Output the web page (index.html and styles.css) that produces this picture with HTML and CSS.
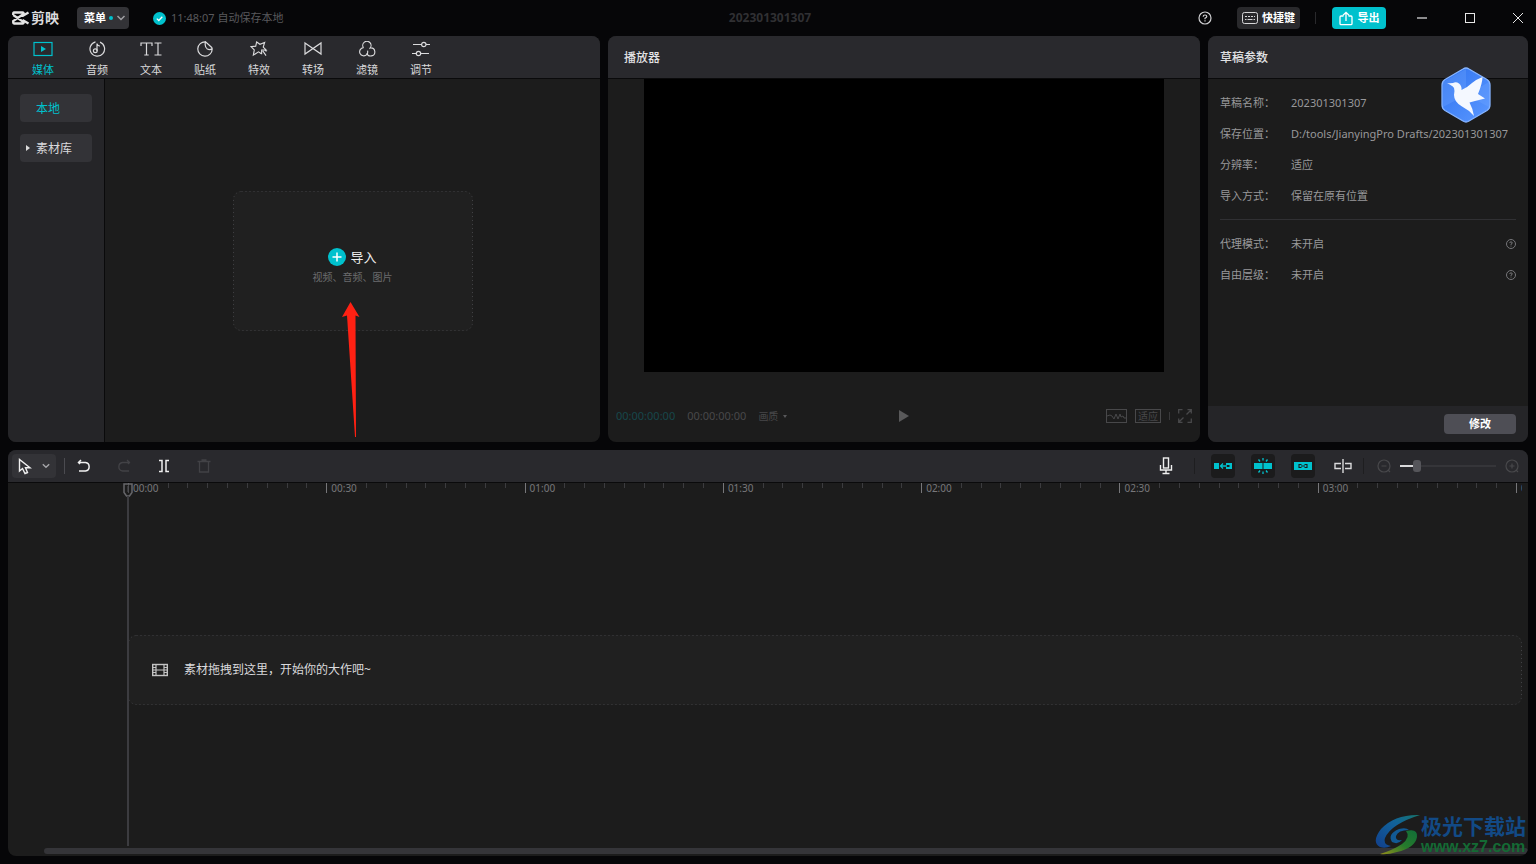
FILE: index.html
```html
<!DOCTYPE html>
<html lang="zh-CN">
<head>
<meta charset="utf-8">
<title>剪映</title>
<link rel="stylesheet" href="styles.css">
</head>
<body>
<div class="app">
  <header class="titlebar">
    <div class="title-left">
      <div class="brand">
        <svg width="18" height="14" viewBox="0 0 18 14" fill="none" stroke="#e4e4e4" stroke-width="2.300"><path d="M1.200 4V2.500Q1.200 1.500 2 1.500H10.500Q12 1.500 11.500 3L1.200 10V11.500Q1.200 12.500 2 12.500H10.500Q12 12.500 11.500 11L1.200 4M10.500 5L16.500 1.500M10.500 9L16.500 12.500"/></svg>
        <span>剪映</span>
      </div>
      <button class="menu-btn">菜单<i class="dot"></i><svg width="10" height="8" viewBox="0 0 10 8" fill="none" stroke="#a0a0a4" stroke-width="1.500"><path d="M1.500 2L5 5.500L8.500 2"/></svg></button>
      <div class="saved">
        <svg width="13" height="13" viewBox="0 0 13 13"><circle cx="6.500" cy="6.500" r="6.500" fill="#00c1cd"/><path d="M3.800 6.600L5.800 8.500L9.300 4.800" fill="none" stroke="#fff" stroke-width="1.300"/></svg>
        <span>11:48:07 自动保存本地</span>
      </div>
    </div>
    <h1 class="doc-title">202301301307</h1>
    <div class="title-right">
      <button class="icon-btn" aria-label="帮助"><svg width="14" height="14" viewBox="0 0 14 14" fill="none" stroke="#cfcfd1" stroke-width="1.200"><circle cx="7" cy="7" r="6"/><path d="M5.200 5.700Q5.200 4 7 4T8.800 5.600Q8.800 6.500 7 7.200V8.300M7 9.300V10.500"/></svg></button>
      <button class="short-btn"><svg width="16" height="12" viewBox="0 0 16 12" fill="none" stroke="#d6d6d8"><rect x=".5" y=".5" width="15" height="11" rx="2"/><path d="M3 4.500H13" stroke-dasharray="2 1"/><path d="M3 7.500H4.500M5.500 7.500H10.500M11.500 7.500H13"/></svg>快捷键</button>
      <i class="vline"></i>
      <button class="export-btn"><svg width="14" height="15" viewBox="0 0 14 15" fill="none" stroke="#fff" stroke-width="1.300"><path d="M4.500 5H2Q1 5 1 6V12.500Q1 13.700 2 13.700H12Q13 13.700 13 12.500V6Q13 5 12 5H9.500M7 10V1.500M4 4.200L7 1.300L10 4.200"/></svg>导出</button>
      <div class="win-btns">
        <button class="icon-btn" aria-label="最小化"><svg width="12" height="12" viewBox="0 0 12 12"><path d="M1 6H11" stroke="#8b8b8d" stroke-width="2"/></svg></button>
        <button class="icon-btn" aria-label="最大化"><svg width="12" height="12" viewBox="0 0 12 12"><rect x="1.500" y="1.500" width="9" height="9" fill="none" stroke="#e6e6e6"/></svg></button>
        <button class="icon-btn" aria-label="关闭"><svg width="12" height="12" viewBox="0 0 12 12"><path d="M1 1L11 11M11 1L1 11" stroke="#e6e6e6"/></svg></button>
      </div>
    </div>
  </header>

  <div class="workspace">
  <main class="upper">
    <section class="panel">
      <nav class="panel-head tabs">
        <button class="tab on"><svg width="20" height="16" viewBox="0 0 20 16"><rect x="1" y="1.500" width="18" height="13" fill="none" stroke="#00c1cd" stroke-width="1.200"/><path d="M8 5V11L13 8Z" fill="#00c1cd"/></svg>媒体</button>
        <button class="tab"><svg width="18" height="16" viewBox="0 0 18 16" fill="none" stroke="#dadadc" stroke-width="1.200"><path d="M12 1.100A7.300 7.300 0 1 1 7.500 .8M9 10V2.500Q9.500 5 12 5"/><circle cx="7.300" cy="9.800" r="1.900"/></svg>音频</button>
        <button class="tab"><svg width="22" height="16" viewBox="0 0 22 16" fill="none" stroke="#dadadc" stroke-width="1.200"><path d="M1 5V2H12V5M6.500 2V14M4.300 14H8.700M14.500 2H21.500M18 2V14M14.500 14H21.500"/></svg>文本</button>
        <button class="tab"><svg width="18" height="16" viewBox="0 0 18 16" fill="none" stroke="#dadadc" stroke-width="1.200"><path d="M9.500 .8A7.200 7.200 0 1 0 16.200 8Q16.200 7 15.500 6.200L9.500 .8Q8.300 6 11.300 8Q14 9.300 16.200 7.500"/></svg>贴纸</button>
        <button class="tab"><svg width="20" height="17" viewBox="0 0 20 17" fill="none" stroke="#dadadc" stroke-width="1.200"><path d="M12.500 13.500L9.500 11.500L4 15L5 9.500L1.500 6L6.500 5.500L7.500 1L11 3.500L16 1.500L14.500 6.500L17.500 9.500L12.800 9.500V14M14 10.500L17.500 15.500M16 9.500L18 11"/></svg>特效</button>
        <button class="tab"><svg width="18" height="16" viewBox="0 0 18 16" fill="none" stroke="#dadadc" stroke-width="1.200"><path d="M1 2L17 13V2L1 13Z"/></svg>转场</button>
        <button class="tab"><svg width="20" height="17" viewBox="0 0 20 17" fill="none" stroke="#dadadc" stroke-width="1.200"><path d="M6.300 7.300A4.400 4.400 0 1 1 12.600 8.200M13.700 7.300A4.300 4.300 0 1 1 9.800 12.500M6.300 7A4.400 4.400 0 1 0 9.700 14.500Q11.200 13 10.600 10.300"/></svg>滤镜</button>
        <button class="tab"><svg width="18" height="16" viewBox="0 0 18 16" fill="none" stroke="#dadadc" stroke-width="1.200"><path d="M1 3.500H9.500M14 3.500H18M0 12.500H4M9 12.500H17"/><circle cx="11.800" cy="3.500" r="2.200"/><circle cx="6.500" cy="12.500" r="2.200"/></svg>调节</button>
      </nav>
      <div class="media">
        <aside class="side">
          <button class="side-item on">本地</button>
          <button class="side-item"><svg class="caret" width="4" height="6" viewBox="0 0 4 6"><path d="M0 0L4 3L0 6Z" fill="#dcdcdc"/></svg>素材库</button>
        </aside>
        <div class="drop-area">
          <button class="import">
            <svg class="dots"><rect x=".5" y=".5" rx="8"/></svg>
            <span class="import-main"><svg width="18" height="18" viewBox="0 0 18 18"><circle cx="9" cy="9" r="9" fill="#00c1cd"/><path d="M4.500 9H13.500M9 4.500V13.500" stroke="#fff" stroke-width="1.500"/></svg>导入</span>
            <span class="import-sub">视频、音频、图片</span>
          </button>
          <svg class="arrow" width="20" height="136" viewBox="0 0 20 136"><path d="M9.500 1L18.500 16L14.500 14.500L15 136H14L6 14.500L1 16Z" fill="#ff2113"/></svg>
        </div>
      </div>
    </section>

    <section class="panel">
      <h2 class="panel-head head-text">播放器</h2>
      <div class="player">
        <div class="screen"></div>
        <div class="controls">
          <div class="times"><span class="now">00:00:00:00</span><span>00:00:00:00</span><button class="quality">画质<svg width="4" height="3" viewBox="0 0 4 3"><path d="M0 0H4L2 3Z" fill="#58585a"/></svg></button></div>
          <button class="icon-btn" aria-label="播放"><svg width="10" height="12" viewBox="0 0 10 12"><path d="M0 0L10 6L0 12Z" fill="#59595a"/></svg></button>
          <div class="view-tools">
            <button class="tool-s" aria-label="示波器"><svg width="21" height="14" viewBox="0 0 21 14" fill="none" stroke="#48484a"><rect x=".5" y=".5" width="20" height="13"/><path d="M1 7L4 6L6 7L8 10L10 5L12 10L14 5L15 8L17 7L18 9H20"/></svg></button>
            <button class="fit">适应</button>
            <i class="vline short"></i>
            <button class="tool-s" aria-label="全屏"><svg width="14" height="14" viewBox="0 0 14 14" fill="none" stroke="#48484a" stroke-width="1.300"><path d="M.7 4.500V.7H4.500M9.500 .7H13.300V4.500M13.300 .7L8.500 5.500M13.300 9.500V13.300H9.500M4.500 13.300H.7V9.500M.7 13.300L5.500 8.500"/></svg></button>
          </div>
        </div>
      </div>
    </section>

    <section class="panel">
      <h2 class="panel-head head-text narrow">草稿参数</h2>
      <div class="params">
        <dl>
          <div><dt>草稿名称：</dt><dd>202301301307</dd></div>
          <div><dt>保存位置：</dt><dd>D:/tools/JianyingPro Drafts/202301301307</dd></div>
          <div><dt>分辨率：</dt><dd>适应</dd></div>
          <div><dt>导入方式：</dt><dd>保留在原有位置</dd></div>
        </dl>
        <dl class="second">
          <div><dt>代理模式：</dt><dd>未开启</dd><svg width="10" height="10" viewBox="0 0 14 14" fill="none" stroke="#77777a" stroke-width="1.400"><circle cx="7" cy="7" r="6.300"/><path d="M5.200 5.700Q5.200 4 7 4T8.800 5.600Q8.800 6.500 7 7.200V8.300M7 9.300V10.500"/></svg></div>
          <div><dt>自由层级：</dt><dd>未开启</dd><svg width="10" height="10" viewBox="0 0 14 14" fill="none" stroke="#77777a" stroke-width="1.400"><circle cx="7" cy="7" r="6.300"/><path d="M5.200 5.700Q5.200 4 7 4T8.800 5.600Q8.800 6.500 7 7.200V8.300M7 9.300V10.500"/></svg></div>
        </dl>
      </div>
      <footer class="params-foot"><button class="edit">修改</button></footer>
      <svg class="bird" width="50" height="56" viewBox="0 0 50 56">
        <defs><linearGradient id="hex" x1="0" y1="0" x2="1" y2="1"><stop offset="0" stop-color="#2f73f0"/><stop offset="1" stop-color="#5b98ff"/></linearGradient></defs>
        <path d="M22 2Q25 0 28 2L46 12.500Q49 14.500 49 18V38Q49 41.500 46 43.500L28 54Q25 56 22 54L4 43.500Q1 41.500 1 38V18Q1 14.500 4 12.500Z" fill="url(#hex)" stroke="#86b4ff" stroke-width="1.300"/>
        <path d="M25 2V28L48 15V40L25 28L2 40V15Z" fill="#73a8ff" opacity=".3"/>
        <path d="M6 16.500L12 16Q15 14.500 18 16.500Q21 19 20.500 23Q27 20 31 16Q35 12.500 41.500 10Q41.500 16 37 27L44 31.500L34 34L28.500 35.500Q32 42 33 49Q28 43 21 39.500Q13 35 13 28Q14 24 13 21Q11 18 6 16.500Z" fill="#f4f8ff"/>
      </svg>
    </section>
  </main>

  <section class="panel">
    <div class="toolbar">
      <button class="select-tool" aria-label="选择"><svg width="14" height="17" viewBox="0 0 14 17" fill="none" stroke="#f0f0f0" stroke-width="1.400"><path d="M1.500 1.500V13L4.500 10.500L7 15.500L9.500 14.500L7.500 9.800H12Z"/></svg><svg width="8" height="6" viewBox="0 0 8 6" fill="none" stroke="#a5a5a8" stroke-width="1.400"><path d="M.8 1.200L4 4.200L7.200 1.200"/></svg></button>
      <i class="vline grey"></i>
      <button class="tool" aria-label="撤销"><svg width="14" height="14" viewBox="0 0 14 14" fill="none" stroke="#f0f0f0" stroke-width="1.500"><path d="M1 3.500H8.500A4.300 4.300 0 0 1 8.500 12H2M4 1L1.500 3.500L3 5"/></svg></button>
      <button class="tool" aria-label="重做" disabled><svg width="14" height="14" viewBox="0 0 14 14" fill="none" stroke="#424246" stroke-width="1.300"><path d="M13 3.500H5.500A4.300 4.300 0 0 0 5.500 12H12M10 1L12.500 3.500L11 5"/></svg></button>
      <button class="tool" aria-label="分割"><svg width="12" height="14" viewBox="0 0 12 14" fill="none" stroke="#f0f0f0" stroke-width="1.500"><path d="M1 1.500H4V12.500H1M11 1.500H8V12.500H11"/></svg></button>
      <button class="tool" aria-label="删除" disabled><svg width="14" height="14" viewBox="0 0 14 14" fill="none" stroke="#424246" stroke-width="1.300"><path d="M.5 2.500H13.500M4.500 1H9.500M2.500 2.500V13H11.500V2.500"/></svg></button>
      <div class="tools-right">
        <button class="tool" aria-label="录音"><svg width="14" height="18" viewBox="0 0 14 18" fill="none" stroke="#f0f0f0" stroke-width="1.400"><rect x="4.500" y="1" width="5" height="10"/><path d="M1.500 8V13H12.500V8M7 13V16.500M3.500 16.500H10.500"/></svg></button>
        <i class="vline dark"></i>
        <button class="tool toggled" aria-label="主轨磁吸"><svg width="18" height="8" viewBox="0 0 18 8"><path d="M0 1H5V7H0ZM12 1H18V7H12V5H15.500V3H12Z" fill="#00c1cd"/><path d="M9 1.500L6.500 4L9 6.500M7 4H13" fill="none" stroke="#00c1cd" stroke-width="1.300"/></svg></button>
        <button class="tool toggled" aria-label="自动吸附"><svg width="18" height="16" viewBox="0 0 18 16"><path d="M0 5H8.500V11H0ZM9.500 5H18V11H9.500Z" fill="#00c1cd"/><path d="M9 0V2.500M9 13.500V16M4.500 1.500L6 3.500M13.500 1.500L12 3.500M4.500 14.500L6 12.500M13.500 14.500L12 12.500" stroke="#00c1cd" stroke-width="1.300"/></svg></button>
        <button class="tool toggled" aria-label="联动"><svg width="18" height="8" viewBox="0 0 18 8"><path d="M0 0H18V8H0Z" fill="#00c1cd"/><path d="M7.500 2.500H5V5.500H7.500M10.500 2.500H13V5.500H10.500M7 4H11" fill="none" stroke="#1b1b1c" stroke-width="1.100"/></svg></button>
        <button class="tool" aria-label="预览轴"><svg width="18" height="14" viewBox="0 0 18 14" fill="none" stroke="#dadadc" stroke-width="1.400"><path d="M7 4.500H1V9.500H7M11 4.500H17V9.500H11M9 0V14"/></svg></button>
        <div class="zoom">
          <i class="vline dark"></i>
          <button class="tool" aria-label="缩小"><svg width="14" height="14" viewBox="0 0 14 14" fill="none" stroke="#48484b" stroke-width="1.200"><circle cx="7" cy="7" r="6"/><path d="M4.500 7H9.500M11 11L13 13"/></svg></button>
          <input type="range" aria-label="时间线缩放" min="0" max="100" value="15">
          <button class="tool" aria-label="放大"><svg width="14" height="14" viewBox="0 0 14 14" fill="none" stroke="#48484b" stroke-width="1.200"><circle cx="7" cy="7" r="6"/><path d="M4.500 7H9.500M7 4.500V9.500M11 11L13 13"/></svg></button>
        </div>
      </div>
    </div>
    <div class="tracks">
      <div class="ruler">
        <div class="seg"><span>00:00</span><i></i><i></i><i></i><i></i><i></i><i></i><i></i><i></i></div>
        <div class="seg"><span>00:30</span><i></i><i></i><i></i><i></i><i></i><i></i><i></i><i></i></div>
        <div class="seg"><span>01:00</span><i></i><i></i><i></i><i></i><i></i><i></i><i></i><i></i></div>
        <div class="seg"><span>01:30</span><i></i><i></i><i></i><i></i><i></i><i></i><i></i><i></i></div>
        <div class="seg"><span>02:00</span><i></i><i></i><i></i><i></i><i></i><i></i><i></i><i></i></div>
        <div class="seg"><span>02:30</span><i></i><i></i><i></i><i></i><i></i><i></i><i></i><i></i></div>
        <div class="seg"><span>03:00</span><i></i><i></i><i></i><i></i><i></i><i></i><i></i><i></i></div>
        <div class="seg last"><span>0</span></div>
      </div>
      <div class="lane">
        <div class="hint">
          <svg class="dots"><rect x=".5" y=".5" rx="8"/></svg>
          <svg width="16" height="14" viewBox="0 0 16 14" fill="none" stroke="#c4c4c4"><rect x=".7" y="1.500" width="14.600" height="11" stroke-width="1.400"/><path d="M4 1.500V12.500M12 1.500V12.500M4 7H12" stroke-width="1.200"/><path d="M1 4.500H4M1 7H4M1 9.500H4M12 4.500H15M12 7H15M12 9.500H15"/></svg>
          <span>素材拖拽到这里，开始你的大作吧~</span>
        </div>
      </div>
      <div class="scroll"></div>
      <div class="playhead"><svg width="10" height="14" viewBox="0 0 10 14"><path d="M1 1H9V9.500L6.500 13H3.500L1 9.500Z" fill="#1c1c1c" fill-opacity=".5" stroke="#66666a" stroke-width="1.500"/><path d="M5 3V9" stroke="#55555a"/></svg></div>
    </div>
  </section>
  </div>

  <div class="mark">
    <svg width="46" height="42" viewBox="0 0 46 42">
      <defs>
        <linearGradient id="mb" x1="0" y1="1" x2="1" y2="0"><stop offset="0" stop-color="#123f8c"/><stop offset=".6" stop-color="#11639b"/><stop offset="1" stop-color="#17766c"/></linearGradient>
        <linearGradient id="mg" x1="0" y1="1" x2="1" y2="0"><stop offset="0" stop-color="#96901c"/><stop offset=".5" stop-color="#267a2c"/><stop offset="1" stop-color="#116d38"/></linearGradient>
      </defs>
      <path d="M45 1Q20 0 6 15Q-4 28 5 33Q10 35 16 32Q8 31 10 24Q16 10 45 1Z" fill="url(#mb)"/>
      <path d="M17 28Q12 20 24 15Q31 13 34 16Q23 16 21 22Q20 27 27 26Q23 31 17 28Z" fill="#125a94"/>
      <path d="M31 17Q43 14 42 23Q40 34 22 38Q12 41 5 40Q18 36 27 30Q36 23 31 17Z" fill="url(#mg)"/>
    </svg>
    <div class="mark-text"><span class="mark-name">极光下载站</span><span class="mark-url">www.xz7.com</span></div>
  </div>
</div>
</body>
</html>
```
FILE: styles.css
```css
* { box-sizing: border-box; }

body {
  margin: 0;
  background: #060608;
  color: #dadadc;
  font: 11px/16px "Noto Sans", "Noto Sans CJK SC", sans-serif;
}

h1, h2, dl, dd { margin: 0; }

svg { display: block; flex: none; }

button {
  display: flex;
  align-items: center;
  justify-content: center;
  padding: 0;
  border: 0;
  background: none;
  color: inherit;
  font: inherit;
}

.app {
  position: relative;
  display: grid;
  grid-template-rows: 36px minmax(0, 1fr);
  height: 100vh;
}

.workspace {
  display: grid;
  grid-template-rows: repeat(2, minmax(0, 1fr));
  gap: 8px;
  min-width: 0;
  padding: 0 8px 8px;
}

/* title bar */
.titlebar {
  display: grid;
  grid-template-columns: 1fr auto 1fr;
  align-items: center;
  padding: 0 8px 0 12px;
}

.title-left, .title-right, .win-btns, .brand, .saved { display: flex; align-items: center; }

.brand { gap: 1px; font-size: 14px; font-weight: 700; margin-right: 18px; }

.menu-btn {
  gap: 3px;
  width: 52px;
  height: 22px;
  padding-left: 4px;
  border-radius: 4px;
  background: #333337;
  color: #fff;
  font-weight: 700;
}

.dot { width: 4px; height: 4px; border-radius: 2px; background: #00c1cd; }

.saved { gap: 5px; margin-left: 24px; color: #59595c; }

.doc-title { color: #303033; font-size: 12px; line-height: 16px; font-weight: 700; }

.title-right { justify-content: flex-end; }

.icon-btn { width: 20px; height: 20px; }

.short-btn, .export-btn {
  gap: 4px;
  height: 22px;
  padding: 0 4px;
  border-radius: 4px;
  background: #29292c;
  color: #fff;
  font-weight: 700;
}

.short-btn { width: 63px; margin: 0 15px 0 22px; }

.export-btn { gap: 5px; width: 54px; margin-left: 16px; background: #00c1cd; }

.win-btns { gap: 28px; margin-left: 26px; }

.vline { width: 1px; height: 12px; background: #29292c; }
.vline.short { height: 8px; background: #38383a; }
.vline.grey { height: 16px; background: #4b4b50; }
.vline.dark { height: 16px; background: #1e1e20; }

/* panels */
.upper {
  display: grid;
  grid-template-columns: 37fr 37fr 20fr;
  gap: 8px;
}

.panel {
  position: relative;
  display: flex;
  flex-direction: column;
  min-width: 0;
  overflow: hidden;
  border-radius: 8px;
  background: #1c1c1c;
}

.panel-head {
  flex: none;
  height: 43px;
  border-bottom: 1px solid #0a0a0b;
  background: #29292d;
}

.head-text {
  padding: 0 16px;
  color: #e2e2e4;
  font-size: 12px;
  line-height: 43px;
  font-weight: 500;
}

.head-text.narrow { padding: 0 12px; }

.tabs { display: flex; padding: 0 8px; }

.tab { flex-direction: column; justify-content: flex-start; gap: 5px; width: 54px; padding-top: 5px; }
.tab svg { height: 16px; }
.tab.on, .side-item.on { color: #00c1cd; }

.media { display: flex; flex: 1; }

.side {
  display: flex;
  flex-direction: column;
  gap: 12px;
  width: 97px;
  padding: 15px 12px;
  border-right: 1px solid #0a0a0b;
  background: #252528;
}

.side-item {
  position: relative;
  justify-content: flex-start;
  height: 28px;
  padding: 2px 0 0 16px;
  border-radius: 4px;
  background: #333337;
  font-size: 12px;
}

.caret { position: absolute; left: 6px; top: 11px; }

.drop-area { position: relative; display: flex; flex: 1; align-items: center; justify-content: center; }

.import {
  position: relative;
  flex-direction: column;
  gap: 2px;
  width: 240px;
  height: 140px;
  padding-top: 10px;
  border-radius: 8px;
  background: #202020;
}

.dots { position: absolute; inset: 0; width: 100%; height: 100%; }

.dots rect {
  width: calc(100% - 1px);
  height: calc(100% - 1px);
  fill: none;
  stroke: #414144;
  stroke-dasharray: 1 3;
}

.import-main { display: flex; align-items: center; gap: 4px; color: #f0f0f0; font-size: 13px; line-height: 20px; }
.import-sub { color: #6c6c6e; font-size: 10px; }

.arrow { position: absolute; left: calc(50% - 12px); top: calc(50% + 40px); }

/* player */
.player { display: flex; flex: 1; flex-direction: column; }

.screen { flex: 1; margin: 0 36px; background: #000; }

.controls {
  display: grid;
  grid-template-columns: 1fr auto 1fr;
  align-items: center;
  height: 70px;
  padding: 18px 8px 0;
}

.times { display: flex; align-items: center; gap: 12px; color: #48484a; }
.now { color: #17474b; }
.quality { gap: 5px; font-size: 10px; }
.controls .icon-btn, .times, .view-tools { height: 16px; }

.view-tools { display: flex; align-items: center; justify-content: flex-end; gap: 8px; }

.fit { height: 14px; padding: 0 2px; border: 1px solid #48484a; color: #48484a; font-size: 10px; line-height: 12px; }

/* draft parameters */
.params { flex: 1; padding: 8px 12px; color: #98989a; }
.params dl > div { display: flex; align-items: center; height: 31px; }
.params dt { flex: none; width: 71px; }
.params dd { flex: 1; white-space: nowrap; }
.params .second { margin-top: 8px; padding-top: 8px; border-top: 1px solid #303033; }

.params-foot { display: flex; align-items: center; justify-content: flex-end; height: 36px; padding: 0 12px; background: #252528; }

.edit { width: 72px; height: 20px; border-radius: 4px; background: #4e4e55; color: #fff; font-weight: 700; }

.bird { position: absolute; right: 37px; top: 31px; }

/* timeline */
.toolbar {
  display: flex;
  flex: none;
  align-items: center;
  gap: 16px;
  height: 33px;
  padding: 0 4px;
  border-bottom: 1px solid #0a0a0b;
  background: #29292d;
}

.select-tool { gap: 10px; width: 44px; height: 24px; margin-right: -8px; border-radius: 4px; background: #333337; }
.vline.grey { margin-right: -9px; }

.tool { width: 24px; height: 24px; border-radius: 4px; }
.toggled { background: #1b1b1c; }

.tools-right { display: flex; align-items: center; gap: 16px; margin-left: auto; }

.zoom { display: flex; align-items: center; gap: 4px; margin-left: -8px; }
.zoom .vline { margin-right: 4px; }

.zoom input {
  width: 96px;
  height: 16px;
  margin: 0;
  appearance: none;
  background: linear-gradient(to right, #dadadc 15%, #353539 15%) center / 100% 2px no-repeat;
}

.zoom input::-webkit-slider-thumb { appearance: none; width: 8px; height: 12px; border-radius: 3px; background: #55555a; }

.tracks { position: relative; display: flex; flex: 1; flex-direction: column; }

.ruler {
  display: grid;
  grid-template-columns: repeat(7, 100fr) 3fr;
  height: 16px;
  margin: 0 6px 0 120px;
  color: #77777a;
}

.seg { display: grid; grid-template-columns: repeat(10, 1fr); align-items: start; min-width: 0; }
.seg span { grid-column: span 2; padding-left: 4px; border-left: 1px solid #77777a; font-size: 10px; line-height: 10px; }
.seg i { height: 5px; border-left: 1px solid #3c3c3f; }
.seg.last { display: block; overflow: hidden; }
.seg.last span { display: block; }

.lane { display: flex; flex: 1; align-items: center; padding: 0 6px 7px 120px; }

.hint {
  position: relative;
  display: flex;
  flex: 1;
  align-items: center;
  gap: 16px;
  height: 70px;
  padding-left: 24px;
  border-radius: 8px;
  background: #202020;
  font-size: 12px;
}

.scroll { height: 6px; margin: 0 0 2px 36px; border-radius: 3px; background: #353539; }

.playhead { position: absolute; left: 115px; top: 0; bottom: 10px; }
.playhead::after { content: ""; position: absolute; left: 4px; top: 13px; bottom: 0; width: 2px; background: #3c3c40; }

/* corner mark */
.mark { position: absolute; right: 10px; bottom: 8px; display: flex; align-items: center; }
.mark-text { display: flex; flex-direction: column; font-weight: 700; }
.mark-name { color: #124a86; font-size: 21px; line-height: 24px; }
.mark-url { color: #146a34; font: 700 16px/18px "Liberation Sans", sans-serif; }
```
